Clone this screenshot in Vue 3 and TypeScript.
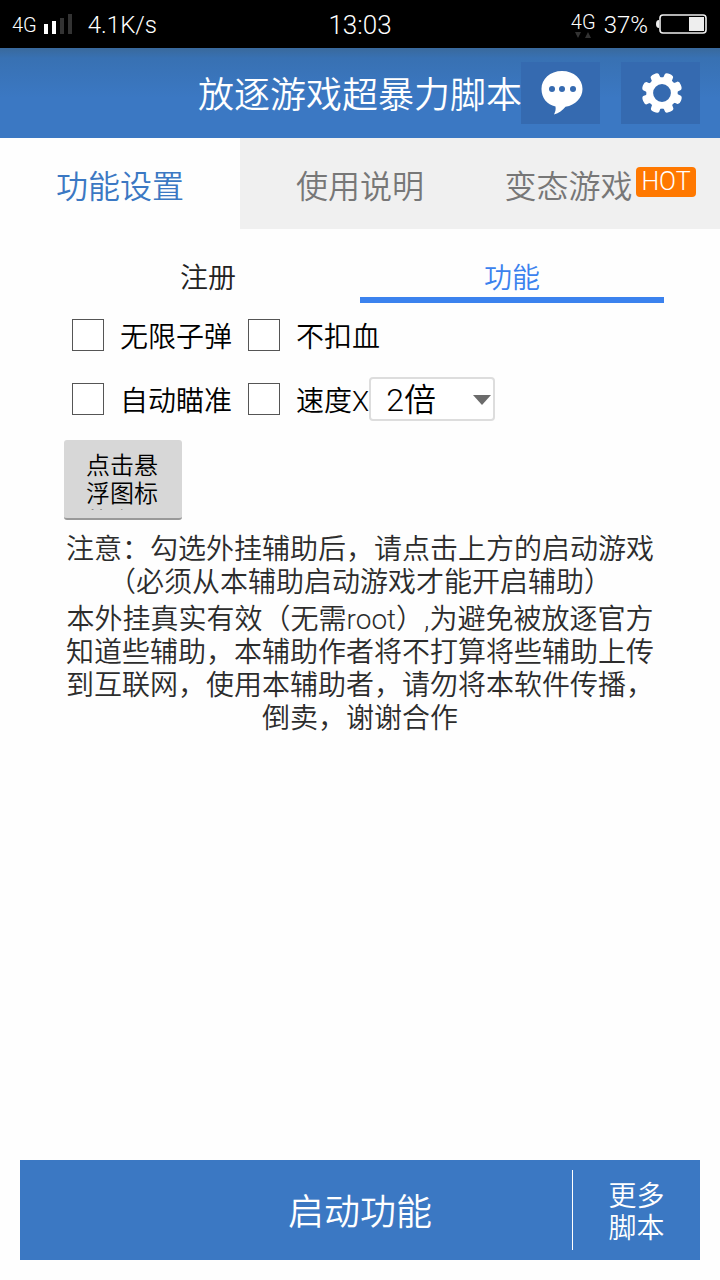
<script setup lang="ts">
import { ref } from 'vue'

interface Option {
  id: string
  label: string
}

const mainTab = ref(0)
const subTab = ref(1)
const speed = ref('2')
const checked = ref<string[]>([])

const mainTabs: string[] = ['功能设置', '使用说明', '变态游戏']
const subTabs: string[] = ['注册', '功能']
const rows: Option[][] = [
  [
    { id: 'ammo', label: '无限子弹' },
    { id: 'health', label: '不扣血' },
  ],
  [
    { id: 'aim', label: '自动瞄准' },
    { id: 'speed', label: '速度X' },
  ],
]
const teeth: number[] = [22, 67, 112, 157, 202, 247, 292, 337]
</script>

<template>
  <div class="screen">
    <div class="status">
      <div class="status-left">
        <span class="net">4G</span>
        <svg class="signal" width="28" height="22" viewBox="0 0 28 22" aria-hidden="true">
          <rect x="0" y="10" width="4" height="10" fill="#fff" />
          <rect x="8" y="7" width="4" height="13" fill="#fff" />
          <rect x="16" y="4" width="4" height="16" fill="#333" />
          <rect x="24" y="0" width="4" height="20" fill="#333" />
        </svg>
        <span class="rate">4.1K/s</span>
      </div>
      <span class="clock">13:03</span>
      <div class="status-right">
        <span class="net-stack">
          <span class="net">4G</span>
          <svg width="16" height="6" viewBox="0 0 16 6" aria-hidden="true">
            <path d="M0 0h6L3 6zM10 6h6L13 0z" fill="#333" />
          </svg>
        </span>
        <span class="percent">37%</span>
        <svg width="52" height="22" viewBox="0 0 52 22" aria-hidden="true">
          <path d="M3 6Q0 6 0 10t3 4z" fill="#eee" />
          <rect x="4" y="1" width="46" height="18" rx="3" fill="none" stroke="#eee" stroke-width="1.600" />
          <rect x="33" y="3" width="15" height="14" fill="#eee" />
        </svg>
      </div>
    </div>

    <header class="header">
      <h1>放逐游戏超暴力脚本</h1>
      <div class="actions">
        <button type="button" aria-label="消息">
          <svg width="44" height="46" viewBox="0 0 44 46" aria-hidden="true">
            <path d="M22 1C10 1 1.500 9 1.500 19c0 9 5.500 15.500 14 17.500 .5 3-.2 5.500-1.500 8 5-1.500 8.500-4 11.500-7.700C35.500 35 42.500 28 42.500 19 42.500 9 34 1 22 1z" fill="#fff" />
            <g fill="#356ab0">
              <circle cx="12" cy="19" r="3" />
              <circle cx="22" cy="19" r="3" />
              <circle cx="33" cy="19" r="3" />
            </g>
          </svg>
        </button>
        <button type="button" aria-label="设置">
          <svg width="44" height="44" viewBox="-22 -22 44 44" aria-hidden="true">
            <path
              v-for="angle in teeth"
              :key="angle"
              :transform="`rotate(${angle})`"
              d="M-6-12Q-4-15-4.500-18.500-4-20.500 0-20.500T4.500-18.500Q4-15 6-12z"
              fill="#fff"
            />
            <circle r="12.300" fill="none" stroke="#fff" stroke-width="6.800" />
          </svg>
        </button>
      </div>
    </header>

    <nav class="main-tabs">
      <button
        v-for="(tab, i) in mainTabs"
        :key="tab"
        type="button"
        :class="{ active: mainTab === i }"
        @click="mainTab = i"
      >
        <span>{{ tab }}</span>
        <span v-if="i === 2" class="hot">HOT</span>
      </button>
    </nav>

    <main class="content">
      <div class="sub-tabs">
        <button
          v-for="(tab, i) in subTabs"
          :key="tab"
          type="button"
          :class="{ active: subTab === i }"
          @click="subTab = i"
        >
          {{ tab }}
        </button>
      </div>

      <div v-for="(row, r) in rows" :key="r" class="row">
        <label v-for="item in row" :key="item.id" class="option">
          <input v-model="checked" type="checkbox" :value="item.id" />
          <span>{{ item.label }}</span>
        </label>
        <div v-if="r === 1" class="picker">
          <select v-model="speed" aria-label="速度倍数">
            <option value="2">2倍</option>
            <option value="3">3倍</option>
            <option value="5">5倍</option>
          </select>
          <svg class="arrow" width="18" height="10" viewBox="0 0 18 10" aria-hidden="true">
            <path d="M0 0h18L9 10z" fill="#6b6b6b" />
          </svg>
        </div>
      </div>

      <button type="button" class="float-button"><span>点击悬浮图标的启动</span></button>

      <div class="notes">
        <p>注意：勾选外挂辅助后，请点击上方的启动游戏<br />（必须从本辅助启动游戏才能开启辅助）</p>
        <p>
          本外挂真实有效（无需root）,为避免被放逐官方<br />知道些辅助，本辅助作者将不打算将些辅助上传<br />到互联网，使用本辅助者，请勿将本软件传播，<br />倒卖，谢谢合作
        </p>
      </div>
    </main>

    <footer class="bottom">
      <button type="button" class="start">启动功能</button>
      <button type="button" class="more">更多<br />脚本</button>
    </footer>
  </div>
</template>

<style>
body {
  background: #fefefe;
}
</style>

<style scoped>
.screen {
  display: flex;
  flex-direction: column;
  min-height: 100vh;
  box-sizing: border-box;
  background: #fefefe;
  color: #000;
  font-family: Roboto, "Noto Sans CJK SC DemiLight", "Noto Sans CJK SC", sans-serif;
  font-weight: 350;
}

button,
select {
  font: inherit;
  color: inherit;
  border: 0;
  margin: 0;
  padding: 0;
  background: none;
}

svg {
  display: block;
}

.status {
  display: grid;
  grid-template-columns: 1fr auto 1fr;
  align-items: center;
  height: 48px;
  padding: 2px 12px 0;
  box-sizing: border-box;
  background: #000;
  color: #fff;
  font-size: 24px;
  line-height: 28px;
}

.status-left,
.status-right {
  display: flex;
  align-items: center;
}

.status-right {
  justify-content: flex-end;
  gap: 8px;
}

.net {
  font-size: 20px;
  line-height: 20px;
}

.signal {
  margin: 0 16px 0 7px;
}

.clock {
  font-size: 26px;
}

.net-stack {
  display: flex;
  flex-direction: column;
  align-items: center;
}

.header {
  display: grid;
  grid-template-columns: minmax(0, 1fr) auto minmax(0, 1fr);
  align-items: center;
  height: 90px;
  padding: 0 20px;
  background: linear-gradient(#39699c, #3871b3 10px, #3b78c3 50px);
  color: #fff;
}

.header h1 {
  grid-column: 2;
  margin: 0;
  padding-top: 6px;
  font-size: 36px;
  line-height: 48px;
  font-weight: inherit;
  white-space: nowrap;
}

.actions {
  display: flex;
  gap: 21px;
  justify-self: end;
}

.actions button {
  display: flex;
  align-items: center;
  justify-content: center;
  box-sizing: border-box;
  width: 79px;
  height: 62px;
  padding-left: 2px;
  background: #356ab0;
}

.main-tabs {
  display: grid;
  grid-template-columns: repeat(3, 1fr);
  height: 91px;
}

.main-tabs button {
  display: flex;
  align-items: center;
  justify-content: center;
  gap: 4px;
  padding-top: 6px;
  background: #f0f0f0;
  color: #777;
  font-size: 32px;
  line-height: 40px;
}

.main-tabs .active {
  background: #fefefe;
  color: #3b78c3;
}

.hot {
  padding: 0 5px;
  margin-bottom: 10px;
  border-radius: 4px;
  background: #ff7800;
  color: #fff;
  font-size: 25px;
  line-height: 30px;
}

.content {
  flex: 1;
  padding: 26px 56px 0;
}

.sub-tabs {
  display: grid;
  grid-template-columns: 1fr 1fr;
}

.sub-tabs button {
  height: 48px;
  padding-top: 6px;
  border-bottom: 6px solid transparent;
  color: #222;
  font-size: 28px;
  line-height: 36px;
}

.sub-tabs .active {
  border-color: #3b82ee;
  color: #3b82ee;
}

.row {
  display: flex;
  align-items: center;
  height: 64px;
  padding-left: 16px;
}

.option {
  display: flex;
  align-items: center;
  gap: 16px;
  font-size: 28px;
  line-height: 36px;
  white-space: nowrap;
}

.option span {
  padding-top: 6px;
}

.option:first-child {
  width: 176px;
}

.option input {
  appearance: none;
  flex: none;
  box-sizing: border-box;
  width: 32px;
  height: 32px;
  margin: 0;
  border: 1px solid #555;
  background: #fff;
}

.option input:checked {
  background: #3b78c3;
}

.picker {
  position: relative;
}

.picker select {
  appearance: none;
  display: block;
  box-sizing: border-box;
  width: 126px;
  height: 44px;
  padding: 2px 32px 0 15px;
  border: 2px solid #ddd;
  border-radius: 4px;
  background: #fff;
  color: #000;
  font-size: 32px;
}

.arrow {
  position: absolute;
  right: 4px;
  top: 18px;
  pointer-events: none;
}

.float-button {
  display: block;
  box-sizing: border-box;
  width: 118px;
  height: 80px;
  margin: 9px 0 0 8px;
  padding: 4px 22px 0;
  border-bottom: 2px solid #999;
  border-radius: 3px;
  background: #d7d7d7;
  color: #000;
  font-size: 24px;
  line-height: 28px;
}

.float-button span {
  display: block;
  width: 74px;
  height: 58px;
  overflow: hidden;
  text-align: left;
}

.notes {
  display: flex;
  flex-direction: column;
  gap: 4px;
  margin-top: 13px;
  color: #2c2c2c;
  font-size: 28px;
  line-height: 33px;
  text-align: center;
}

.notes p {
  margin: 0;
}

.bottom {
  display: flex;
  align-items: center;
  height: 100px;
  margin: 20px;
  background: #3b78c3;
  color: #fff;
}

.start {
  flex: 1;
  padding: 6px 0 0 128px;
  height: 100%;
  font-size: 36px;
  line-height: 48px;
}

.more {
  width: 128px;
  height: 80px;
  padding-top: 6px;
  border-left: 1px solid #fff;
  font-size: 28px;
  line-height: 32px;
}
</style>
